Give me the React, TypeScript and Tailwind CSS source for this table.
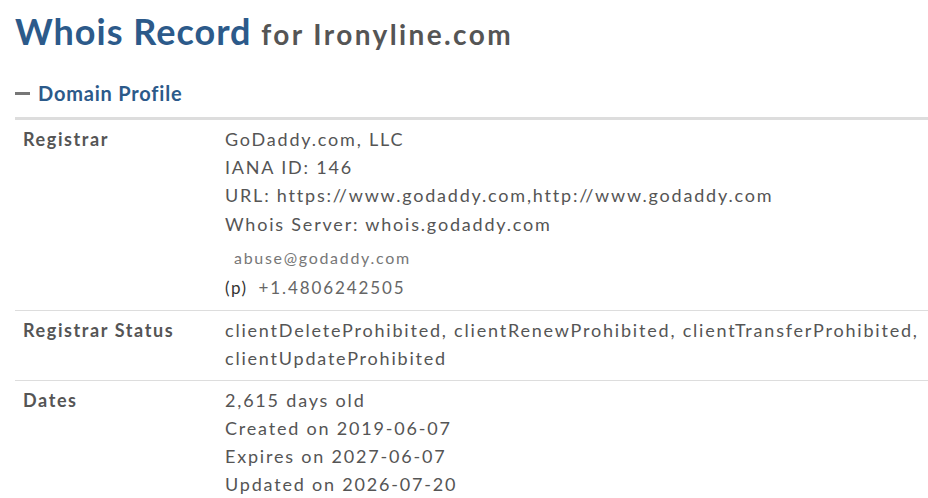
import React from "react";

const rows = [
  {
    label: "Registrar",
    lines: [
      "GoDaddy.com, LLC",
      "IANA ID: 146",
      "URL: https://www.godaddy.com,http://www.godaddy.com",
      "Whois Server: whois.godaddy.com",
    ],
    contact: true,
  },
  {
    label: "Registrar Status",
    lines: [
      "clientDeleteProhibited, clientRenewProhibited, clientTransferProhibited, clientUpdateProhibited",
    ],
  },
  {
    label: "Dates",
    lines: [
      "2,615 days old",
      "Created on 2019-06-07",
      "Expires on 2027-06-07",
      "Updated on 2026-07-20",
    ],
  },
];

export default function App() {
  return (
    <div className="w-[928px] h-[498px] overflow-hidden bg-white pl-[15px] font-['Lato',sans-serif] text-[#555]">
      {/* Title */}
      <h1 className="pt-[9px] leading-[44px] font-bold text-[#2c5a8a] text-[36px] tracking-[1px]">
        Whois Record{" "}
        <span className="text-[28px] text-[#555] tracking-[2.4px]">
          for Ironyline.com
        </span>
      </h1>

      {/* Section header */}
      <div className="mt-[23px] flex items-center gap-[8px] h-[28px]">
        <span className="block w-[15px] h-[3px] bg-[#777]" />
        <span className="text-[20px] font-bold text-[#2c5a8a] tracking-[0.8px]">
          Domain Profile
        </span>
      </div>

      <div className="mt-[10px] border-t-[3px] border-[#ddd]">
        {rows.map((row, i) => (
          <div
            key={row.label}
            className={`flex pt-[5px] pb-[8px] text-[18px] leading-[28px] tracking-[1.8px] ${
              i > 0 ? "border-t border-[#ddd]" : ""
            }`}
          >
            <div className="w-[210px] shrink-0 pl-[8px] font-bold tracking-[1.6px]">
              {row.label}
            </div>
            <div className="flex-1">
              {row.lines.map((l, j) => (
                <div key={l} className={row.contact && j === 3 ? "leading-[30px]" : ""}>
                  {l}
                </div>
              ))}
              {row.contact && (
                <>
                  <div className="pl-[9px] pt-[4px] text-[16px] leading-[30px] text-[#777] tracking-[1.7px]">
                    abuse@godaddy.com
                  </div>
                  <div className="flex items-center gap-[11px] leading-[29px]">
                    <span className="text-[17px] text-[#333] tracking-[1.5px]">
                      (p)
                    </span>
                    <span className="text-[17px] text-[#666] tracking-[1.9px]">
                      +1.4806242505
                    </span>
                  </div>
                </>
              )}
            </div>
          </div>
        ))}
      </div>
    </div>
  );
}
